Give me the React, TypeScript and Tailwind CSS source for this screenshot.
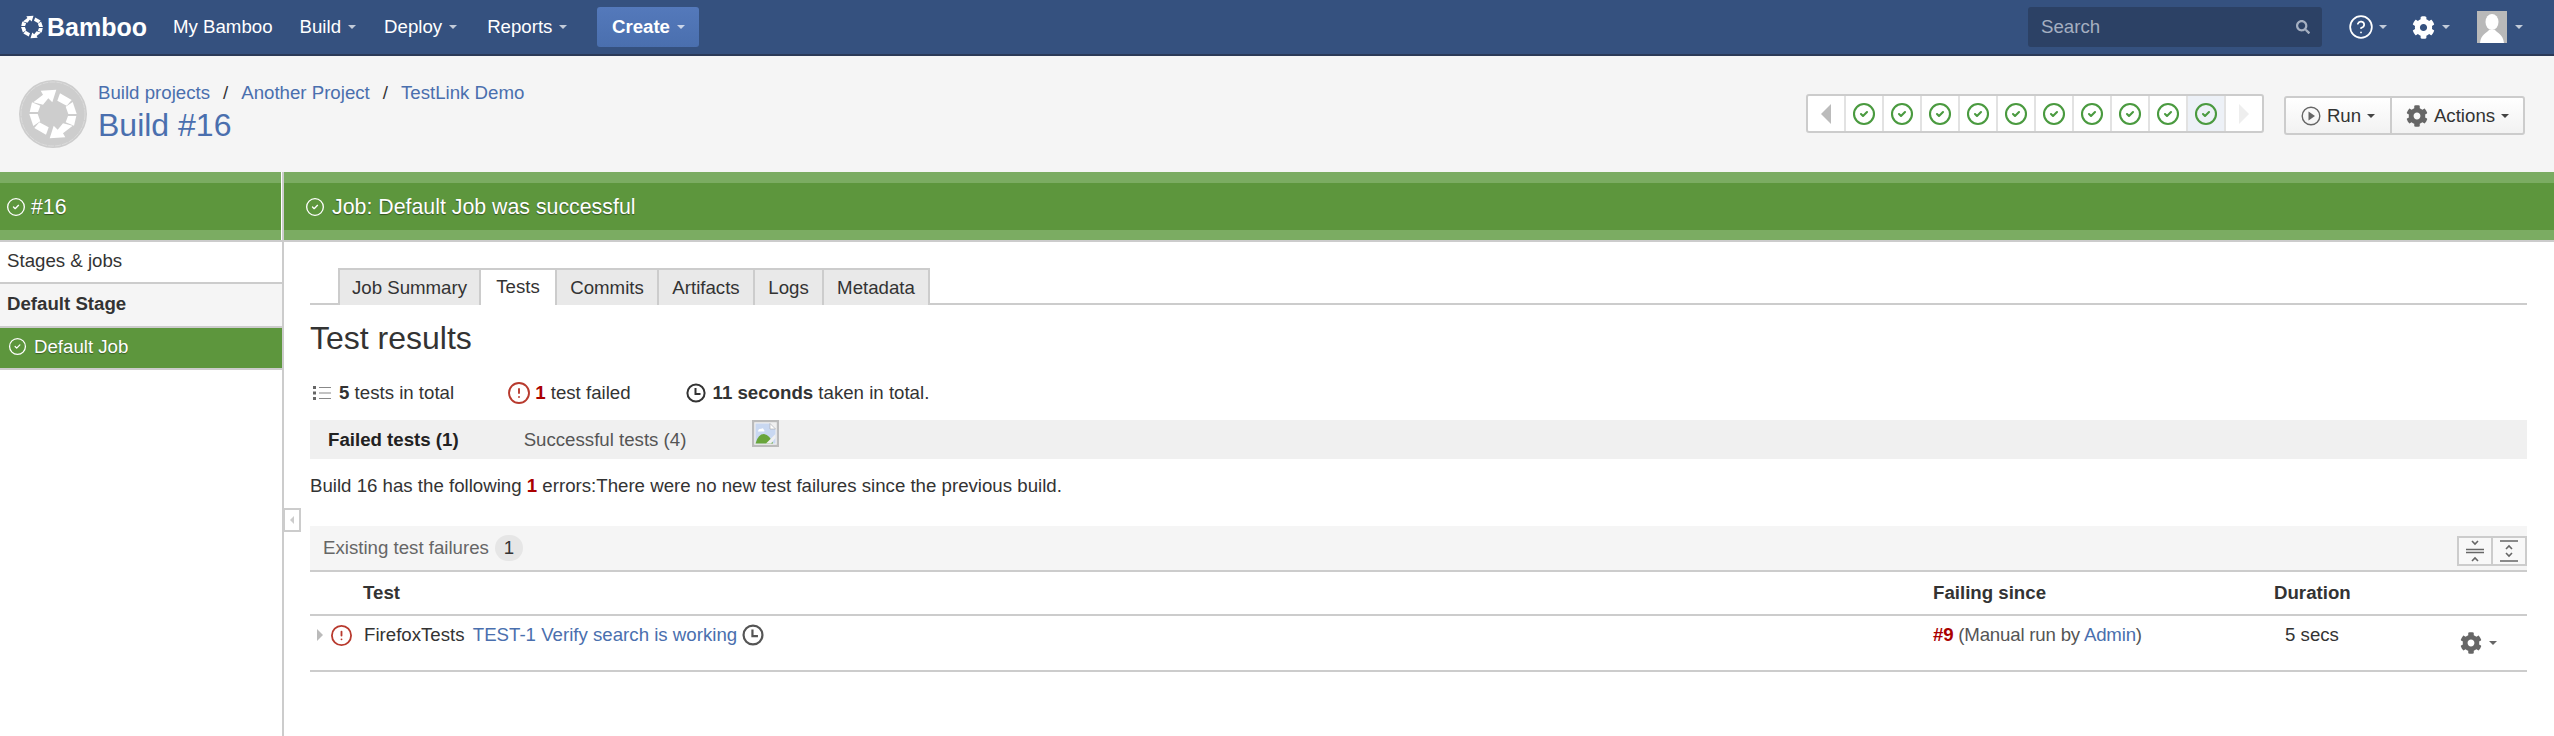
import { CircleAlert, CircleCheck, CircleHelp } from 'lucide-react'
import { FaCog, FaSearch } from 'react-icons/fa'

function Caret({ className = 'border-t-white/70' }: { className?: string }) {
  return <span className={`inline-block w-0 h-0 border-x-[4px] border-t-[4px] border-x-transparent ${className}`} />
}

function NavItem({ label, className = '' }: { label: string; className?: string }) {
  return (
    <span className={`flex items-center gap-[7px] text-white ${className}`}>
      {label}
      <Caret />
    </span>
  )
}

// the bamboo ring: six blocks and two arrows, drawn around 34,34
function Ring() {
  return (
    <g fill="#fff">
      <path d="M37.3 9.7 L21.7 10.7 L24 14.7 L14.3 22.3 L24 24.7 L29.3 18.3 L33.3 22.3 Z" />
      <path d="M30.7 58.3 L46.3 57.3 L44 53.3 L53.7 45.7 L44 43.3 L38.7 49.7 L34.7 45.7 Z" />
      <path d="M41 13.3 L52.7 20 L47.7 25.7 L38.3 20.7 Z" />
      <path d="M53.7 22 L57.7 34 L49.3 34 L46.7 26.7 Z" />
      <path d="M49 36 L57.3 36 L55 45.7 L46.7 42.3 Z" />
      <path d="M27 54.7 L15.3 48 L20.3 42.3 L29.7 47.3 Z" />
      <path d="M14.3 46 L10.3 34 L18.7 34 L21.3 41.3 Z" />
      <path d="M19 32 L10.7 32 L13 22.3 L21.3 25.7 Z" />
    </g>
  )
}

function BambooLogo() {
  return (
    <svg viewBox="8 8 52 52" className="w-[24px] h-[24px]">
      <Ring />
    </svg>
  )
}

function ProjectAvatar() {
  return (
    <svg viewBox="0 0 68 68" className="w-[68px] h-[68px] shrink-0">
      <circle cx="34" cy="34" r="34" fill="#cdcdcd" />
      <circle cx="34" cy="34" r="32" fill="none" stroke="#dedede" strokeWidth="0.8" strokeDasharray="6 1" />
      <Ring />
    </svg>
  )
}

function ClockIcon({ color = '#333', size = 'w-[20px] h-[20px]' }: { color?: string; size?: string }) {
  return (
    <svg viewBox="0 0 20 20" className={`${size} shrink-0`} fill="none" stroke={color} strokeWidth="2">
      <circle cx="10" cy="10" r="8.6" />
      <path d="M9.5 5 V11 H14.5" />
    </svg>
  )
}

function ListIcon() {
  return (
    <svg viewBox="0 0 18 16" className="w-[18px] h-[16px] shrink-0">
      <g fill="#666">
        <rect x="0" y="1" width="3" height="3" />
        <rect x="0" y="6.5" width="3" height="3" />
        <rect x="0" y="12" width="3" height="3" />
      </g>
      <g fill="#888">
        <rect x="6" y="2" width="12" height="1" />
        <rect x="6" y="7.5" width="12" height="1" />
        <rect x="6" y="13" width="12" height="1" />
      </g>
    </svg>
  )
}

function BrokenImage() {
  return (
    <svg viewBox="0 0 27 27" className="w-[27px] h-[27px]">
      <rect x="1" y="1" width="25" height="25" fill="#f0f0f0" stroke="#bbb" strokeWidth="2.4" />
      <path d="M3.5 3.5 H18 L23.5 9 V23.5 H3.5 Z" fill="#c9d8f1" />
      <path d="M18 3.5 V9 H23.5 Z" fill="#fff" stroke="#aaa" strokeWidth="0.6" />
      <path d="M6 11 Q7 8 9 9 Q11 7 12 10 Q13 11 12 11.5 H6 Z" fill="#fff" />
      <path d="M3.5 23.5 Q6 14 12 14 Q18 15 21 23.5 Z" fill="#69a53b" />
      <path d="M14 23.5 L23.5 14 V18 L19 23.5 Z" fill="#f0f0f0" />
    </svg>
  )
}

function Tab({ label, active = false, className = '' }: { label: string; active?: boolean; className?: string }) {
  return (
    <span
      className={`h-[37px] flex items-center justify-center border-t-2 border-r-2 border-[#ccc] ${
        active ? 'bg-white text-[#333] -mb-[2px] pb-[2px]' : 'bg-[#e9e9e9] text-[#333]'
      } ${className}`}
    >
      {label}
    </span>
  )
}

function RevisionCell({ current = false }: { current?: boolean }) {
  return (
    <span className={`w-[38px] flex items-center justify-center border-r-2 border-[#e2e2e2] ${current ? 'bg-[#edf1f7]' : ''}`}>
      <CircleCheck size={24} strokeWidth={2.1} color="#4a9a3f" />
    </span>
  )
}

const revisions = [1, 2, 3, 4, 5, 6, 7, 8, 9, 10]

export default function App() {
  return (
    <div className="relative w-[2554px] h-[736px] overflow-hidden bg-white text-[18.67px] leading-[26px] text-[#333] font-['Liberation_Sans',Arial,sans-serif]">
      <header className="h-[56px] bg-[#35517f] border-b-2 border-[#2b3a57] flex items-center pl-[20px] pr-[31px]">
        <BambooLogo />
        <span className="ml-[3px] text-[25px] font-bold text-white">Bamboo</span>
        <span className="ml-[26px] text-white">My Bamboo</span>
        <NavItem label="Build" className="ml-[27px]" />
        <NavItem label="Deploy" className="ml-[28px]" />
        <NavItem label="Reports" className="ml-[30px]" />
        <span className="ml-[30px] w-[102px] h-[40px] rounded-[3px] bg-gradient-to-b from-[#5479bb] to-[#4a6fae] flex items-center justify-center gap-[7px] text-white font-bold">
          Create
          <Caret />
        </span>
        <div className="ml-auto w-[294px] h-[40px] rounded-[3px] bg-[#2c4165] flex items-center justify-between pl-[13px] pr-[12px] text-[#a5afc1]">
          Search
          <FaSearch size={14} color="#a5afc1" />
        </div>
        <span className="ml-[26px] flex items-center gap-[5px]">
          <CircleHelp size={26} color="#fff" strokeWidth={1.6} />
          <Caret />
        </span>
        <span className="ml-[25px] flex items-center gap-[7px]">
          <FaCog size={23} color="#fff" />
          <Caret />
        </span>
        <span className="ml-[27px] flex items-center gap-[8px]">
          <svg viewBox="0 0 30 32" className="w-[30px] h-[32px]">
            <rect width="30" height="32" fill="#b9b9b9" />
            <ellipse cx="15" cy="11" rx="6.5" ry="8" fill="#fff" />
            <path d="M3 32 C4 23 10 22 12 19 H18 C20 22 26 23 27 32 Z" fill="#fff" />
          </svg>
          <Caret />
        </span>
      </header>

      <section className="h-[116px] bg-[#f5f5f5] flex pl-[19px] pr-[29px]">
        <div className="pt-[24px]">
          <ProjectAvatar />
        </div>
        <div className="ml-[11px] pt-[24px]">
          <div className="flex items-center text-[#4a6fae] h-[26px]">
            <span>Build projects</span>
            <span className="mx-[13px] text-[#333]">/</span>
            <span>Another Project</span>
            <span className="mx-[13px] text-[#333]">/</span>
            <span>TestLink Demo</span>
          </div>
          <div className="text-[32px] leading-[38px] text-[#4a6fae]">Build #16</div>
        </div>
        <div className="ml-auto pt-[38px] flex items-start gap-[20px]">
          <div className="h-[39px] w-[458px] flex bg-white border-2 border-[#ccc] rounded-[3px]">
            <span className="w-[38px] flex items-center justify-center border-r-2 border-[#e2e2e2]">
              <span className="w-0 h-0 border-y-[10px] border-r-[10px] border-y-transparent border-r-[#bbb]" />
            </span>
            {revisions.map((n) => (
              <RevisionCell key={n} current={n === 10} />
            ))}
            <span className="flex-1 flex items-center justify-center">
              <span className="w-0 h-0 border-y-[10px] border-l-[10px] border-y-transparent border-l-[#eee]" />
            </span>
          </div>
          <div className="mt-[2px] h-[39px] w-[241px] flex border-2 border-[#ccc] rounded-[3px] bg-gradient-to-b from-white to-[#f2f2f2]">
            <span className="w-[106px] flex items-center justify-center gap-[6px] border-r-2 border-[#ccc]">
              <svg viewBox="0 0 20 20" className="w-[20px] h-[20px]" fill="none" stroke="#666" strokeWidth="1.4">
                <circle cx="10" cy="10" r="8.8" />
                <path d="M7.5 5.5 L14 10 L7.5 14.5 Z" fill="#666" stroke="none" />
              </svg>
              Run
              <Caret className="border-t-[#444]" />
            </span>
            <span className="flex-1 flex items-center justify-center gap-[6px]">
              <FaCog size={22} color="#666" />
              Actions
              <Caret className="border-t-[#444]" />
            </span>
          </div>
        </div>
      </section>

      <main className="flex h-[564px]">
        <aside className="relative w-[284px] shrink-0 border-r-2 border-[#ccc]">
          <div className="h-[68px] mr-[1px] border-t-[11px] border-b-[10px] border-[#7bac62] bg-[#5d963d] flex items-center gap-[5px] pl-[6px] text-white text-[21.33px] [text-shadow:0_1px_1px_rgba(0,0,0,0.45)]">
            <CircleCheck size={20} strokeWidth={1.6} color="#fff" />
            #16
          </div>
          <div className="border-t-2 border-[#ccc] h-[42px] flex items-center pl-[7px] pb-[3px]">Stages &amp; jobs</div>
          <div className="border-t-2 border-[#ccc] h-[44px] bg-[#f5f5f5] flex items-center pl-[7px] pb-[3px] font-bold">Default Stage</div>
          <div className="border-y-2 border-[#ccc] h-[44px] bg-[#5d963d] flex items-center gap-[7px] pl-[8px] pb-[3px] text-white [text-shadow:0_1px_1px_rgba(0,0,0,0.4)]">
            <CircleCheck size={19} strokeWidth={1.6} color="#fff" />
            Default Job
          </div>
          <span className="absolute -right-[19px] top-[336px] w-[18px] h-[24px] bg-white border-2 border-[#ccc] flex items-center justify-center">
            <span className="w-0 h-0 border-y-[4px] border-r-[4px] border-y-transparent border-r-[#ccc]" />
          </span>
        </aside>

        <div className="flex-1 min-w-0">
          <div className="h-[68px] border-t-[11px] border-b-[10px] border-[#7bac62] bg-[#5d963d] flex items-center gap-[7px] pl-[21px] text-white text-[21.33px] [text-shadow:0_1px_1px_rgba(0,0,0,0.45)]">
            <CircleCheck size={20} strokeWidth={1.6} color="#fff" />
            Job: Default Job was successful
          </div>
          <div className="border-t-2 border-[#ccc] pl-[26px] pr-[27px]">
            <div className="mt-[26px] flex border-b-2 border-[#ccc] pl-[28px] h-[37px]">
              <Tab label="Job Summary" className="w-[143px] border-l-2" />
              <Tab label="Tests" active className="w-[76px]" />
              <Tab label="Commits" className="w-[102px]" />
              <Tab label="Artifacts" className="w-[96px]" />
              <Tab label="Logs" className="w-[69px]" />
              <Tab label="Metadata" className="w-[106px]" />
            </div>

            <h1 className="mt-[13px] text-[32px] leading-[40px]">Test results</h1>

            <div className="mt-[22px] flex items-center h-[26px]">
              <span className="ml-[3px]"><ListIcon /></span>
              <span className="ml-[8px]"><b>5</b> tests in total</span>
              <span className="ml-[53px]"><CircleAlert size={24} color="#b83a2e" strokeWidth={1.9} /></span>
              <span className="ml-[4px]"><b className="text-[#a00]">1</b> test failed</span>
              <span className="ml-[55px]"><ClockIcon /></span>
              <span className="ml-[7px]"><b>11 seconds</b> taken in total.</span>
            </div>

            <div className="mt-[14px] h-[39px] bg-[#f0f0f0] flex items-center pl-[18px]">
              <b className="text-[#222]">Failed tests (1)</b>
              <span className="ml-[65px] text-[#555]">Successful tests (4)</span>
              <span className="ml-[66px] self-start"><BrokenImage /></span>
            </div>

            <p className="mt-[14px]">
              Build 16 has the following <b className="text-[#a00]">1</b> errors:There were no new test failures since the previous build.
            </p>

            <div className="mt-[27px] h-[46px] bg-[#f5f5f5] border-b-2 border-[#ccc] flex items-center pl-[13px]">
              <span className="text-[#666]">Existing test failures</span>
              <span className="ml-[6px] w-[28px] h-[26px] rounded-full bg-[#e6e6e6] flex items-center justify-center">1</span>
              <div className="ml-auto mt-[5px] flex h-[30px] w-[70px] border-2 border-[#ccc] bg-[#f8f8f8]">
                <span className="flex-1 border-r-2 border-[#ccc] flex items-center justify-center">
                  <svg viewBox="0 0 20 24" className="w-[20px] h-[24px]" fill="none" stroke="#666" strokeWidth="1.6">
                    <path d="M7 2 L10 5 L13 2 M7 22 L10 19 L13 22" />
                    <path d="M1 10.5 H19 M1 13.5 H19" />
                  </svg>
                </span>
                <span className="flex-1 flex items-center justify-center">
                  <svg viewBox="0 0 20 24" className="w-[20px] h-[24px]" fill="none" stroke="#666" strokeWidth="1.6">
                    <path d="M1 2 H19 M1 22 H19" />
                    <path d="M7 10 L10 7 L13 10 M7 14 L10 17 L13 14" />
                  </svg>
                </span>
              </div>
            </div>

            <div className="h-[44px] border-b-2 border-[#ccc] flex items-center font-bold">
              <span className="ml-[53px] w-[1570px]">Test</span>
              <span className="w-[341px]">Failing since</span>
              <span>Duration</span>
            </div>

            <div className="h-[56px] border-b-2 border-[#ccc] flex pt-[6px]">
              <div className="w-[54px] h-[26px] flex items-center pl-[7px] gap-[7px]">
                <span className="w-0 h-0 border-y-[6px] border-l-[6px] border-y-transparent border-l-[#bbb]" />
                <CircleAlert size={23} color="#b83a2e" strokeWidth={1.9} />
              </div>
              <div className="w-[1569px] flex items-center h-[26px] gap-[5px]">
                <span>FirefoxTests <span className="ml-[3px] text-[#4a6fae]">TEST-1 Verify search is working</span></span>
                <ClockIcon color="#555" size="w-[22px] h-[22px]" />
              </div>
              <div className="w-[341px] h-[26px] text-[#555] tracking-[-0.2px]">
                <b className="text-[#a00]">#9</b> (Manual run by <span className="text-[#4a6fae]">Admin</span>)
              </div>
              <div className="w-[186px] h-[26px] pl-[11px]">5 secs</div>
              <div className="flex items-center gap-[7px] h-[26px] mt-[8px]">
                <FaCog size={22} color="#666" />
                <Caret className="border-t-[#666]" />
              </div>
            </div>
          </div>
        </div>
      </main>
    </div>
  )
}
